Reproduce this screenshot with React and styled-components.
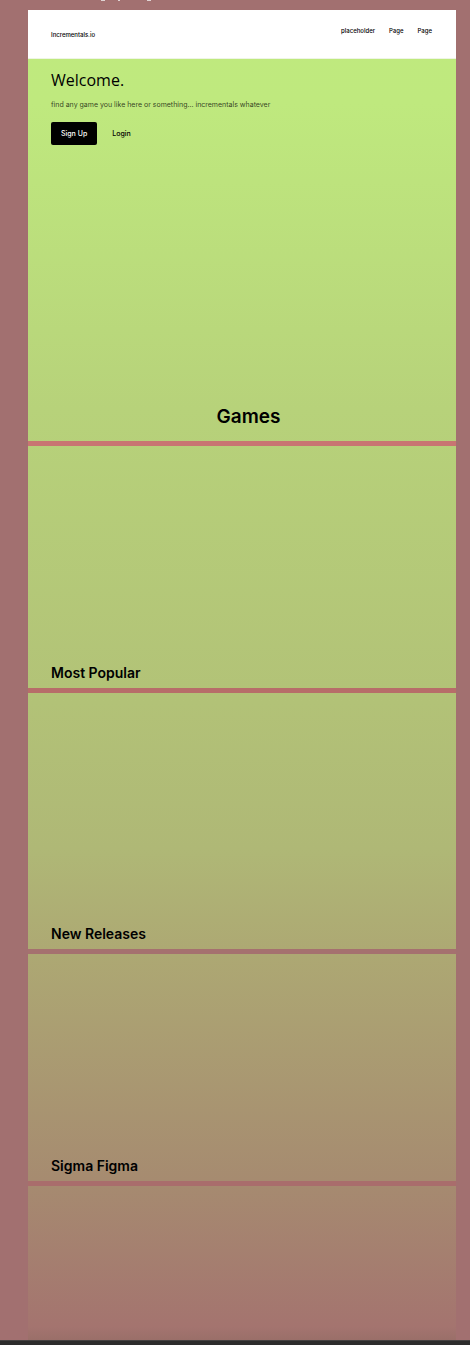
import React from "react";
import styled, { createGlobalStyle } from "styled-components";

const GlobalStyle = createGlobalStyle`
  * { box-sizing: border-box; }
  body {
    margin: 0;
    background: #a27070;
    color: #000;
    font-family: Inter, "Liberation Sans", sans-serif;
  }
  h1, h2, p { margin: 0; }
`;

const Canvas = styled.div`
  display: flex;
  flex-direction: column;
  min-height: 100vh;
`;

const TopEdge = styled.div`
  height: 10px;
  padding-left: 101px;
`;

const EdgeMarks = styled.svg`
  display: block;
`;

const Page = styled.div`
  flex: 1;
  display: flex;
  flex-direction: column;
  margin: 0 14px 0 28px;
  background: linear-gradient(
    to bottom,
    #bfea7e 0,
    #bfe97e 7%,
    #b7d27a 30%,
    #b2c277 52%,
    #afb876 63%,
    #ada873 71%,
    #a68b70 88%,
    #a4746f 99%,
    #9a6f69 100%
  );
`;

const Header = styled.header`
  display: flex;
  justify-content: space-between;
  height: 49px;
  padding: 16px 24px 16px 23px;
  background: #fff;
  border-bottom: 1px solid #eef5e4;
`;

const Brand = styled.a`
  padding-top: 4px;
  color: #000;
  font-size: 6px;
  font-weight: 500;
  line-height: 9px;
  text-decoration: none;
`;

const Nav = styled.nav`
  display: flex;
  gap: 14px;
`;

const NavLink = styled.a`
  color: #000;
  font-size: 6px;
  font-weight: 500;
  line-height: 10px;
  text-decoration: none;
`;

const Hero = styled.section`
  display: flex;
  flex-direction: column;
  align-items: flex-start;
  height: 382px;
  padding: 9px 24px 12px 23px;
`;

const Welcome = styled.h1`
  font-family: "Open Sans", "Noto Sans", sans-serif;
  font-size: 16px;
  font-weight: 400;
  line-height: 24px;
`;

const Tagline = styled.p`
  margin-top: 8px;
  color: rgba(0, 0, 0, 0.75);
  font-size: 7px;
  line-height: 10px;
`;

const Actions = styled.div`
  display: flex;
  gap: 5px;
  margin-top: 12px;
`;

const Button = styled.button`
  height: 23px;
  padding: 0 10px;
  border: 0;
  border-radius: 2px;
  background: ${(p) => (p.$primary ? "#000" : "transparent")};
  color: ${(p) => (p.$primary ? "#fff" : "#000")};
  font: 500 7px/10px Inter, "Liberation Sans", sans-serif;
  cursor: pointer;
`;

const GamesTitle = styled.h2`
  align-self: center;
  margin-top: auto;
  padding-left: 14px;
  font-size: 19px;
  font-weight: 600;
  line-height: 24px;
`;

const Category = styled.section`
  display: flex;
  align-items: flex-end;
  height: ${(p) => p.$height}px;
  padding: 0 24px 5px 23px;
  border-top: 5px solid ${(p) => p.$line};
`;

const CategoryTitle = styled.h2`
  font-size: 14px;
  font-weight: 600;
  line-height: 20px;
`;

const Remainder = styled.section`
  flex: 1;
  min-height: 159px;
  border-top: 5px solid #a96d6c;
`;

const BottomBar = styled.div`
  height: 5px;
  background: #2c2c2c;
  border-top: 1px solid #454241;
`;

const categories = [
  { title: "Most Popular", height: 247, line: "#c87572" },
  { title: "New Releases", height: 261, line: "#b76d69" },
  { title: "Sigma Figma", height: 232, line: "#a5716f" },
];

export default function App() {
  return (
    <>
      <GlobalStyle />
      <Canvas>
        <TopEdge>
          <EdgeMarks width="51" height="1" aria-hidden="true">
            <path d="M0 .5h4M17 .5h2M46 .5h4" stroke="#e0d4d4" />
          </EdgeMarks>
        </TopEdge>
        <Page>
          <Header>
            <Brand href="#home">Incrementals.io</Brand>
            <Nav>
              <NavLink href="#placeholder">placeholder</NavLink>
              <NavLink href="#page-one">Page</NavLink>
              <NavLink href="#page-two">Page</NavLink>
            </Nav>
          </Header>
          <Hero>
            <Welcome>Welcome.</Welcome>
            <Tagline>find any game you like here or something... incrementals whatever</Tagline>
            <Actions>
              <Button type="button" $primary>Sign Up</Button>
              <Button type="button">Login</Button>
            </Actions>
            <GamesTitle>Games</GamesTitle>
          </Hero>
          {categories.map((c) => (
            <Category key={c.title} $height={c.height} $line={c.line}>
              <CategoryTitle>{c.title}</CategoryTitle>
            </Category>
          ))}
          <Remainder />
        </Page>
        <BottomBar />
      </Canvas>
    </>
  );
}
